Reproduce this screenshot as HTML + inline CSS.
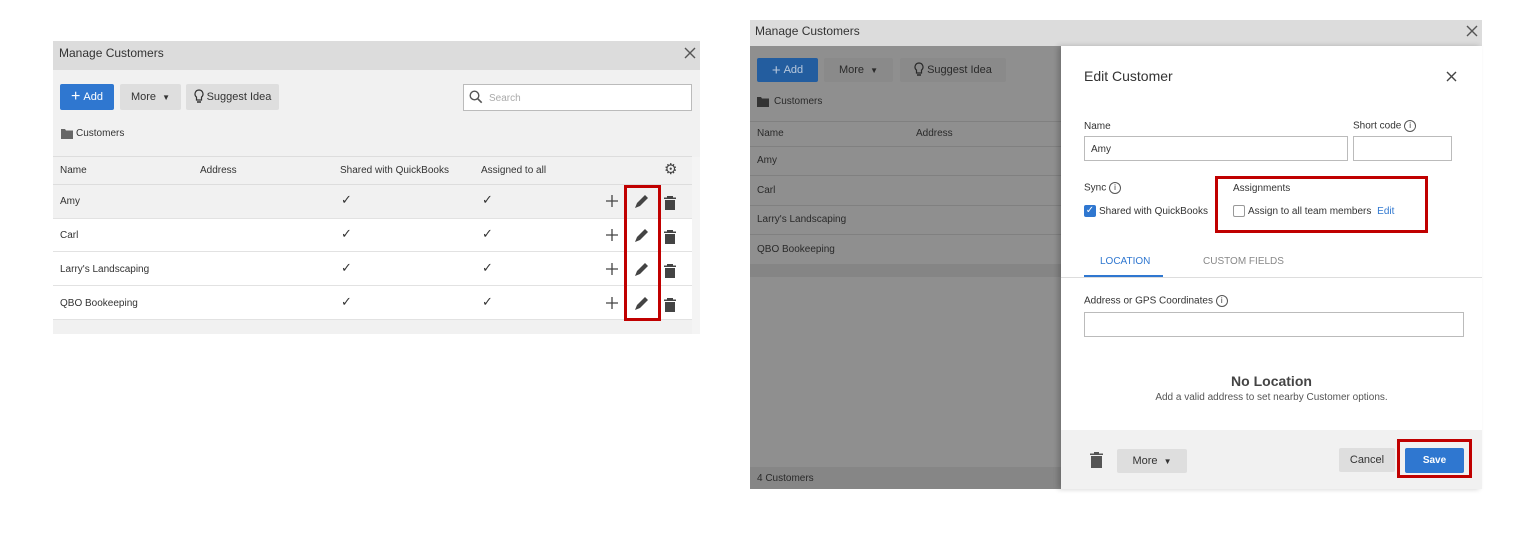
<!DOCTYPE html>
<html><head><style>
*{box-sizing:border-box;margin:0;padding:0}
body{width:1530px;height:546px;background:#fff;font-family:"Liberation Sans",sans-serif;font-size:11px;color:#333;position:relative;overflow:hidden}
.a{position:absolute}
.btn{position:absolute;border-radius:2px;display:flex;align-items:center;justify-content:center;font-size:11px}
.red{position:absolute;border:3px solid #c00000}
.ck{position:absolute;font-size:13px;color:#333}
.i{display:inline-block;width:12px;height:12px;border:1px solid #555;border-radius:50%;font-size:8px;text-align:center;line-height:10px;vertical-align:middle}
</style></head><body>

<!-- LEFT PANEL -->
<div class="a" style="left:53px;top:41px;width:647px;height:293px;background:#f1f1f1"></div>
<div class="a" style="left:53px;top:41px;width:647px;height:29px;background:#dcdcdc"></div>
<div class="a" style="left:59px;top:46px;font-size:12px;color:#333">Manage Customers</div>
<svg class="a" style="left:684px;top:47px" width="12" height="12"><path d="M1 1l10 10M11 1L1 11" stroke="#555" stroke-width="1.4"/></svg>
<div class="btn" style="left:60px;top:84px;width:54px;height:26px;background:#2f77d0;color:#fff"><span style="font-size:16px;margin-right:3px">+</span>Add</div>
<div class="btn" style="left:120px;top:84px;width:61px;height:26px;background:#dedede;color:#333">More&nbsp;&nbsp;<span style="font-size:8px">▼</span></div>
<div class="btn" style="left:186px;top:84px;width:93px;height:26px;background:#dedede;color:#333"><svg width="10" height="16" viewBox="0 0 10 16" style="margin-right:3px"><path d="M5 1a4 4 0 0 0-2.5 7.1V11h5V8.1A4 4 0 0 0 5 1z" fill="none" stroke="#333" stroke-width="1.2"/><path d="M3 13h4" stroke="#333" stroke-width="1.5"/></svg>Suggest Idea</div>
<div class="a" style="left:463px;top:84px;width:229px;height:27px;background:#fff;border:1px solid #bbb"></div>
<svg class="a" style="left:469px;top:90px" width="14" height="14" viewBox="0 0 14 14"><circle cx="5.5" cy="5.5" r="4.3" fill="none" stroke="#555" stroke-width="1.4"/><path d="M8.7 8.7l4 4" stroke="#555" stroke-width="1.6"/></svg>
<div class="a" style="left:489px;top:93px;color:#aaa;font-size:10px">Search</div>
<svg class="a" style="left:61px;top:128px" width="12" height="11"><path d="M0 1h4l1 1.5h7V11H0z" fill="#666"/></svg>
<div class="a" style="left:76px;top:128px;font-size:10px">Customers</div>
<div class="a" style="left:53px;top:156px;width:639px;height:1px;background:#ddd"></div>
<div class="a" style="left:53px;top:184px;width:639px;height:34px;background:#f1f1f1;border-top:1px solid #ddd"></div>
<div class="a" style="left:53px;top:218px;width:639px;height:102px;background:#fff"></div>
<div class="a" style="left:53px;top:251px;width:639px;height:1px;background:#e2e2e2"></div>
<div class="a" style="left:53px;top:285px;width:639px;height:1px;background:#e2e2e2"></div>
<div class="a" style="left:53px;top:218px;width:639px;height:1px;background:#e2e2e2"></div>
<div class="a" style="left:53px;top:319px;width:639px;height:1px;background:#e2e2e2"></div>
<div class="a" style="left:53px;top:320px;width:639px;height:14px;background:#f1f1f1"></div>
<div class="a" style="left:692px;top:157px;width:8px;height:177px;background:#f4f4f4"></div>
<div class="a" style="left:60px;top:165px;font-size:10px">Name</div>
<div class="a" style="left:200px;top:165px;font-size:10px">Address</div>
<div class="a" style="left:340px;top:165px;font-size:10px">Shared with QuickBooks</div>
<div class="a" style="left:481px;top:165px;font-size:10px">Assigned to all</div>
<div class="a" style="left:664px;top:160px;font-size:15px;color:#444">⚙</div>
<div class="a" style="left:60px;top:196px;font-size:10px">Amy</div>
<div class="a" style="left:60px;top:230px;font-size:10px">Carl</div>
<div class="a" style="left:60px;top:264px;font-size:10px">Larry's Landscaping</div>
<div class="a" style="left:60px;top:298px;font-size:10px">QBO Bookeeping</div>
<div class="ck" style="left:341px;top:192px">✓</div><div class="ck" style="left:482px;top:192px">✓</div>
<div class="ck" style="left:341px;top:226px">✓</div><div class="ck" style="left:482px;top:226px">✓</div>
<div class="ck" style="left:341px;top:260px">✓</div><div class="ck" style="left:482px;top:260px">✓</div>
<div class="ck" style="left:341px;top:294px">✓</div><div class="ck" style="left:482px;top:294px">✓</div>
<svg class="a" style="left:600px;top:185px" width="80" height="136">
<g id="r">
<path d="M12 10v12M6 16h12" stroke="#444" stroke-width="1.3"/>
<path d="M35 23l2-5 8-8 3 3-8 8z" fill="#444"/>
<path d="M67 11h6v1.5h3V14H64v-1.5h3z M65 15h10v10h-10z" fill="#444"/>
</g>
<use href="#r" y="34"/><use href="#r" y="68"/><use href="#r" y="102"/>
</svg>
<div class="red" style="left:624px;top:185px;width:37px;height:136px"></div>

<!-- RIGHT PANEL -->
<div class="a" style="left:750px;top:20px;width:732px;height:26px;background:#dcdcdc"></div>
<div class="a" style="left:755px;top:24px;font-size:12px;color:#333">Manage Customers</div>
<svg class="a" style="left:1466px;top:25px" width="12" height="12"><path d="M1 1l10 10M11 1L1 11" stroke="#555" stroke-width="1.4"/></svg>
<div class="a" style="left:750px;top:46px;width:311px;height:443px;background:#8f8f8f"></div>
<div class="btn" style="left:757px;top:58px;width:61px;height:24px;background:#235d9f;color:#b8c8dc"><span style="font-size:15px;margin-right:3px">+</span>Add</div>
<div class="btn" style="left:824px;top:58px;width:69px;height:24px;background:#8a8a8a;color:#2a2a2a">More&nbsp;&nbsp;<span style="font-size:8px">▼</span></div>
<div class="btn" style="left:900px;top:58px;width:106px;height:24px;background:#8a8a8a;color:#2a2a2a"><svg width="10" height="16" viewBox="0 0 10 16" style="margin-right:3px"><path d="M5 1a4 4 0 0 0-2.5 7.1V11h5V8.1A4 4 0 0 0 5 1z" fill="none" stroke="#2a2a2a" stroke-width="1.2"/><path d="M3 13h4" stroke="#2a2a2a" stroke-width="1.5"/></svg>Suggest Idea</div>
<svg class="a" style="left:757px;top:96px" width="12" height="11"><path d="M0 1h4l1 1.5h7V11H0z" fill="#333"/></svg>
<div class="a" style="left:774px;top:96px;font-size:10px;color:#2a2a2a">Customers</div>
<div class="a" style="left:750px;top:121px;width:311px;height:1px;background:#808080"></div>
<div class="a" style="left:757px;top:128px;font-size:10px;color:#2a2a2a">Name</div>
<div class="a" style="left:916px;top:128px;font-size:10px;color:#2a2a2a">Address</div>
<div class="a" style="left:750px;top:146px;width:311px;height:1px;background:#808080"></div>
<div class="a" style="left:750px;top:175px;width:311px;height:1px;background:#808080"></div>
<div class="a" style="left:750px;top:205px;width:311px;height:1px;background:#808080"></div>
<div class="a" style="left:750px;top:234px;width:311px;height:1px;background:#808080"></div>
<div class="a" style="left:750px;top:264px;width:311px;height:13px;background:#858585"></div>
<div class="a" style="left:757px;top:155px;font-size:10px;color:#2a2a2a">Amy</div>
<div class="a" style="left:757px;top:185px;font-size:10px;color:#2a2a2a">Carl</div>
<div class="a" style="left:757px;top:214px;font-size:10px;color:#2a2a2a">Larry's Landscaping</div>
<div class="a" style="left:757px;top:244px;font-size:10px;color:#2a2a2a">QBO Bookeeping</div>
<div class="a" style="left:750px;top:467px;width:311px;height:22px;background:#868686"></div>
<div class="a" style="left:757px;top:473px;font-size:10px;color:#2a2a2a">4 Customers</div>

<div class="a" style="left:1061px;top:46px;width:421px;height:443px;background:#fff;box-shadow:-3px 0 5px rgba(0,0,0,.2)"></div>
<div class="a" style="left:1084px;top:68px;font-size:14px;color:#333">Edit Customer</div>
<svg class="a" style="left:1446px;top:71px" width="11" height="11"><path d="M1 1l9 9M10 1L1 10" stroke="#444" stroke-width="1.4"/></svg>
<div class="a" style="left:1084px;top:121px;font-size:10px">Name</div>
<div class="a" style="left:1353px;top:120px;font-size:10px">Short code <span class="i">i</span></div>
<div class="a" style="left:1084px;top:136px;width:264px;height:25px;border:1px solid #bbb"></div>
<div class="a" style="left:1091px;top:144px;font-size:10px">Amy</div>
<div class="a" style="left:1353px;top:136px;width:99px;height:25px;border:1px solid #bbb"></div>
<div class="a" style="left:1084px;top:182px;font-size:10px">Sync <span class="i">i</span></div>
<div class="a" style="left:1084px;top:205px;width:12px;height:12px;background:#2f77d0;border-radius:2px;color:#fff;font-size:10px;line-height:12px;text-align:center">✓</div>
<div class="a" style="left:1099px;top:206px;font-size:10px">Shared with QuickBooks</div>
<div class="a" style="left:1233px;top:183px;font-size:10px">Assignments</div>
<div class="a" style="left:1233px;top:205px;width:12px;height:12px;border:1px solid #999;border-radius:2px"></div>
<div class="a" style="left:1248px;top:206px;font-size:10px">Assign to all team members <span style="color:#2f77d0;margin-left:3px">Edit</span></div>
<div class="red" style="left:1215px;top:176px;width:213px;height:57px"></div>
<div class="a" style="left:1100px;top:256px;font-size:10px;color:#2f77d0">LOCATION</div>
<div class="a" style="left:1203px;top:256px;font-size:10px;color:#888">CUSTOM FIELDS</div>
<div class="a" style="left:1084px;top:275px;width:79px;height:2px;background:#2f77d0"></div>
<div class="a" style="left:1061px;top:277px;width:421px;height:1px;background:#ddd"></div>
<div class="a" style="left:1084px;top:295px;font-size:10px">Address or GPS Coordinates <span class="i">i</span></div>
<div class="a" style="left:1084px;top:312px;width:380px;height:25px;border:1px solid #bbb"></div>
<div class="a" style="left:1061px;top:373px;width:421px;text-align:center;font-size:14px;font-weight:bold;color:#444">No Location</div>
<div class="a" style="left:1061px;top:392px;width:421px;text-align:center;font-size:10px;color:#555">Add a valid address to set nearby Customer options.</div>
<div class="a" style="left:1061px;top:430px;width:421px;height:59px;background:#f1f1f1"></div>
<svg class="a" style="left:1090px;top:452px" width="13" height="16"><path d="M4 0h5v1.5h4V3H0V1.5h4z M1 4h11v12H1z" fill="#555"/></svg>
<div class="btn" style="left:1117px;top:449px;width:70px;height:24px;background:#dedede;color:#333">More&nbsp;&nbsp;<span style="font-size:8px">▼</span></div>
<div class="btn" style="left:1339px;top:448px;width:56px;height:24px;background:#dedede;color:#333">Cancel</div>
<div class="btn" style="left:1405px;top:448px;width:59px;height:25px;background:#2f77d0;color:#fff;font-weight:bold;font-size:10px">Save</div>
<div class="red" style="left:1397px;top:439px;width:75px;height:39px"></div>
</body></html>
